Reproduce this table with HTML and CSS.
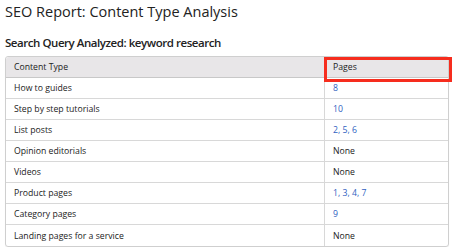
FILE: index.html
```html
<!DOCTYPE html>
<html>
<head>
<meta charset="utf-8">
<link rel="stylesheet" href="styles.css">
</head>
<body>
<h1 class="title">SEO Report: Content Type Analysis</h1>
<h2 class="subtitle">Search Query Analyzed: keyword research</h2>
<div class="table-wrap">
  <table class="report">
    <thead>
      <tr><th class="c1">Content Type</th><th class="c2">Pages</th></tr>
    </thead>
    <tbody>
      <tr><td>How to guides</td><td class="link">8</td></tr>
      <tr><td>Step by step tutorials</td><td class="link">10</td></tr>
      <tr><td>List posts</td><td class="link">2, 5, 6</td></tr>
      <tr><td>Opinion editorials</td><td>None</td></tr>
      <tr><td>Videos</td><td>None</td></tr>
      <tr><td>Product pages</td><td class="link">1, 3, 4, 7</td></tr>
      <tr><td>Category pages</td><td class="link">9</td></tr>
      <tr><td>Landing pages for a service</td><td>None</td></tr>
    </tbody>
  </table>
  <div class="highlight"></div>
</div>
</body>
</html>
```
FILE: styles.css
```css
html, body {
  margin: 0;
  padding: 0;
  background: #ffffff;
}
body {
  padding: 0 5px;
  font-family: "Open Sans", "Noto Sans", sans-serif;
  color: #222;
}
.title {
  margin: 0;
  padding-top: 2px;
  font-size: 14.5px;
  line-height: 20px;
  font-weight: 500;
  color: #222;
}
.subtitle {
  margin: 12px 0 0 0;
  font-size: 11.5px;
  letter-spacing: -0.45px;
  line-height: 18px;
  font-weight: 600;
  color: #222;
}
.table-wrap {
  position: relative;
  margin-top: 4px;
  width: 444px;
}
.report {
  width: 444px;
  border-collapse: separate;
  border-spacing: 0;
  border: 1px solid #cfcfcf;
  border-radius: 3px;
  font-size: 8.7px;
  box-shadow: 0 1px 1px rgba(0,0,0,0.06);
}
.report th, .report td {
  height: 21px;
  padding: 0 8px;
  text-align: left;
  font-weight: 400;
  border-bottom: 1px solid #d8d8d8;
  box-sizing: border-box;
  color: #222;
}
.report tbody tr:last-child td {
  border-bottom: none;
}
.report th {
  background: #e8e6e8;
  border-bottom: 1px solid #c8c8c8;
}
.report th:first-child { border-top-left-radius: 3px; }
.report th:last-child { border-top-right-radius: 3px; }
.report .c1 { width: 318px; }
.report td:last-child, .report th:last-child {
  border-left: 1px solid #d8d8d8;
}
.report td.link {
  color: #2f5fbf;
}
.highlight {
  position: absolute;
  top: 1px;
  left: 319px;
  width: 128px;
  height: 25px;
  box-sizing: border-box;
  border: 3px solid #f62d1e;
}
```
